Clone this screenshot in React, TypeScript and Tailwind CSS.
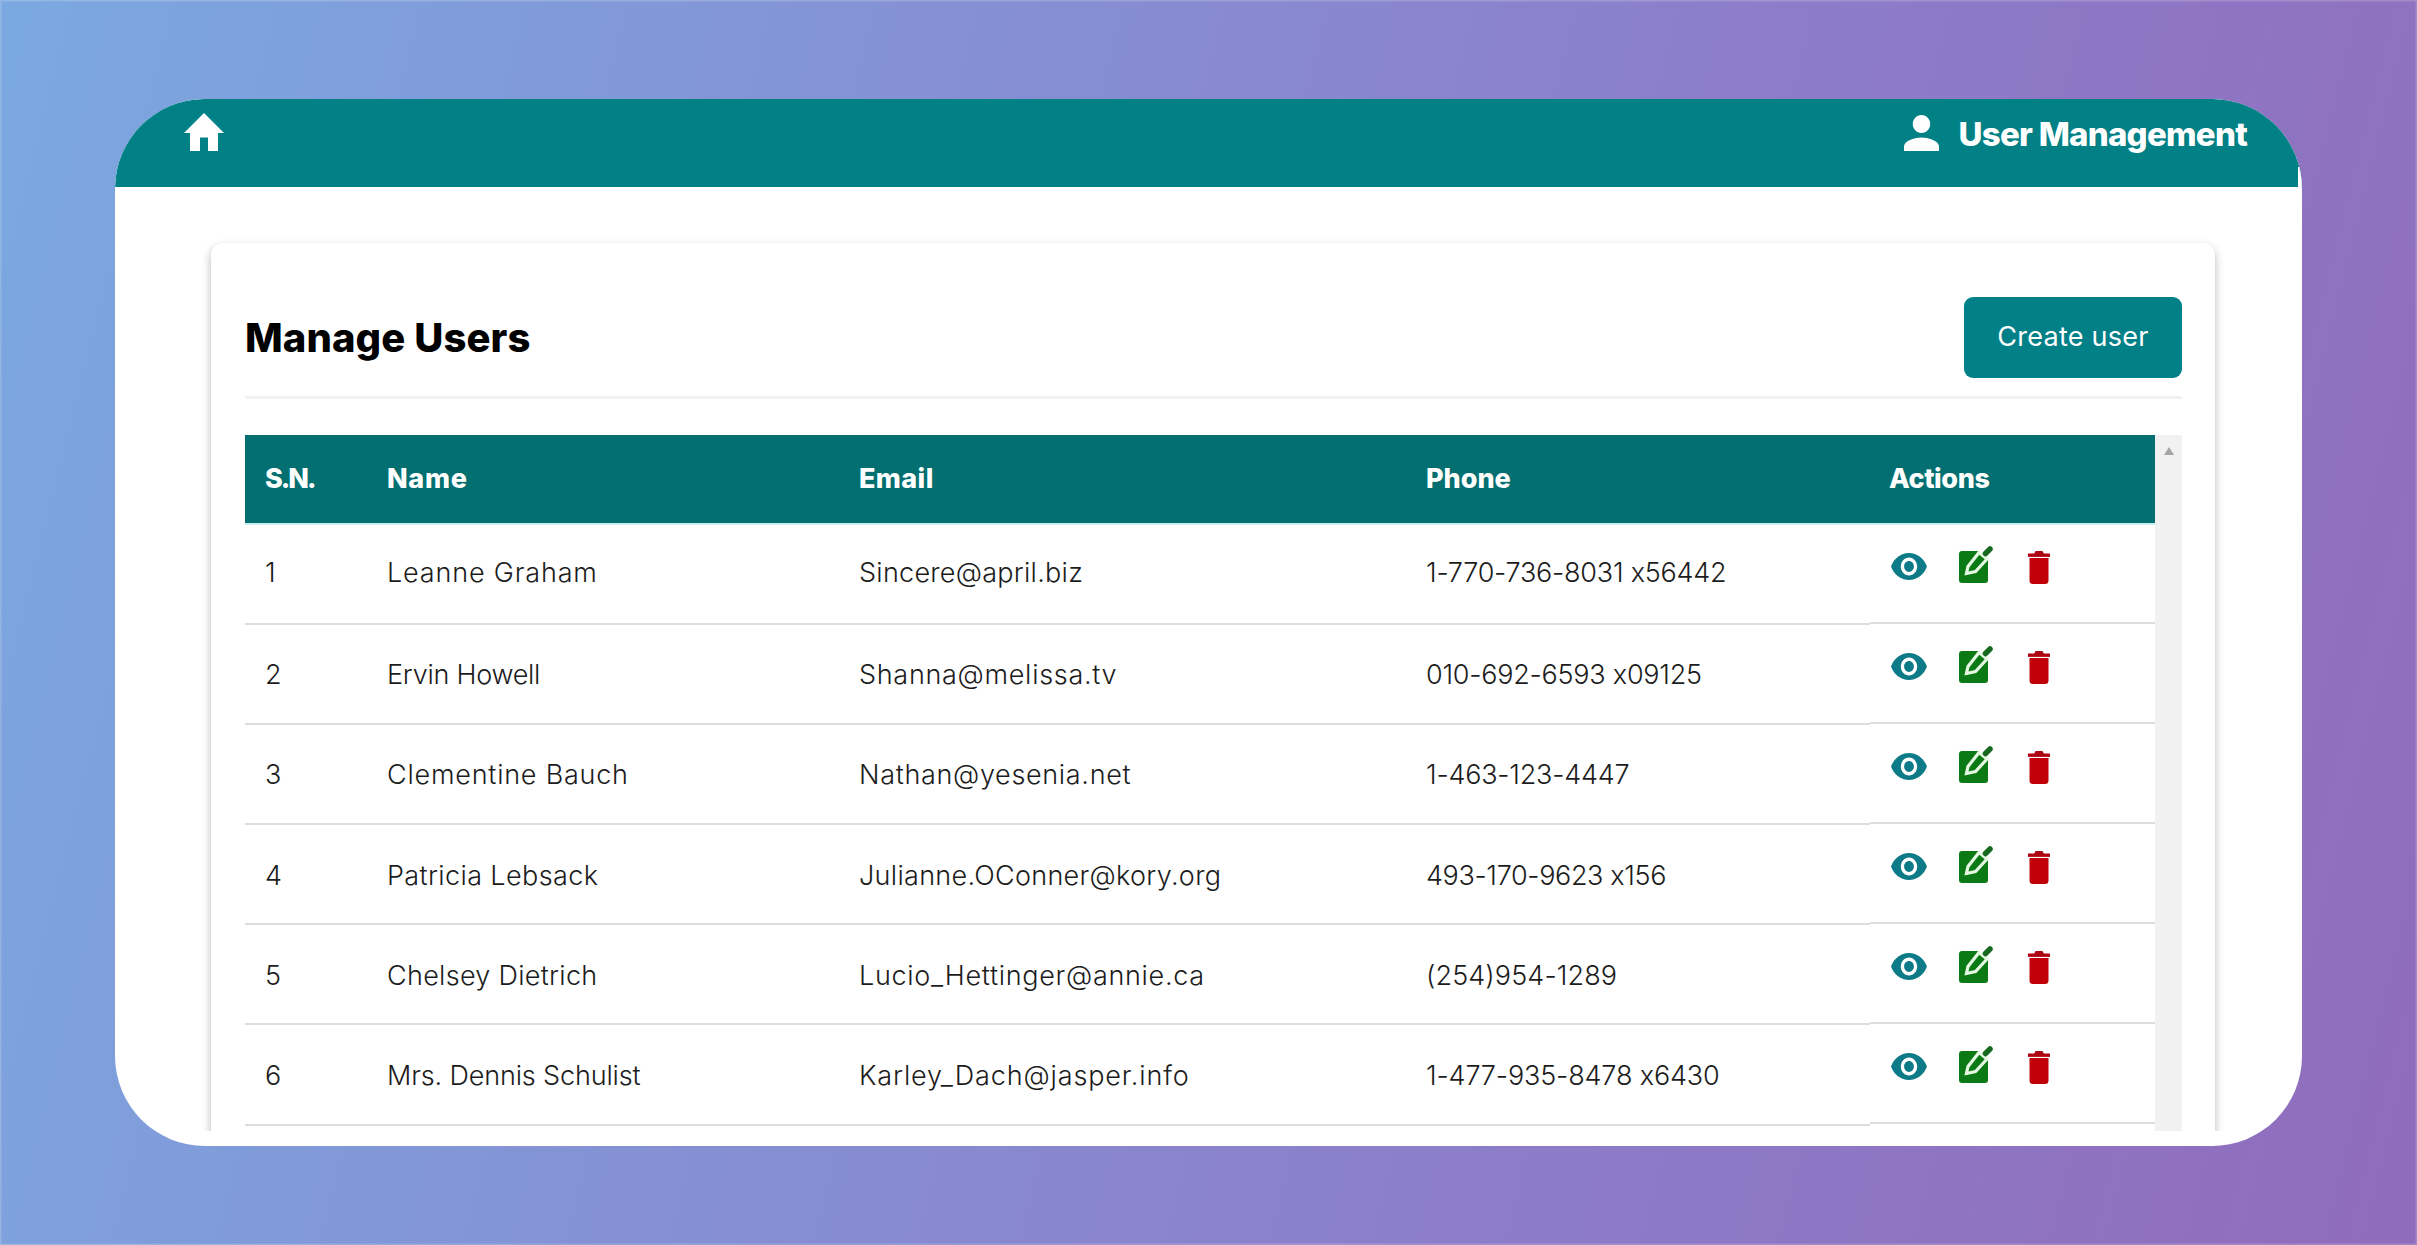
const rows = [
  { n: "1", name: ["Leanne Graham", "tracking-[0.83px]"], email: ["Sincere@april.biz", "tracking-[0.26px]"], phone: ["1-770-736-8031 x56442", "tracking-[-0.23px]"] },
  { n: "2", name: ["Ervin Howell", "tracking-[-0.26px]"], email: ["Shanna@melissa.tv", "tracking-[0.7px]"], phone: ["010-692-6593 x09125", "tracking-[-0.24px]"] },
  { n: "3", name: ["Clementine Bauch", "tracking-[0.77px]"], email: ["Nathan@yesenia.net", "tracking-[0.67px]"], phone: ["1-463-123-4447", "tracking-[-0.22px]"] },
  { n: "4", name: ["Patricia Lebsack", "tracking-[0.38px]"], email: ["Julianne.OConner@kory.org", "tracking-[0.3px]"], phone: ["493-170-9623 x156", "tracking-[-0.36px]"] },
  { n: "5", name: ["Chelsey Dietrich", "tracking-[0.29px]"], email: ["Lucio_Hettinger@annie.ca", "tracking-[0.7px]"], phone: ["(254)954-1289", "tracking-[0.1px]"] },
  { n: "6", name: ["Mrs. Dennis Schulist", "tracking-[-0.15px]"], email: ["Karley_Dach@jasper.info", "tracking-[0.87px]"], phone: ["1-477-935-8478 x6430", "tracking-[-0.15px]"] },
];

const grid = "grid grid-cols-[121px_473px_566px_465px_285px]";

function Eye() {
  return (
    <svg width="36" height="27" viewBox="1 4.5 22 15" preserveAspectRatio="none" fill="#0d7b87">
      <path d="M12 4.5C7 4.5 2.73 7.61 1 12c1.73 4.39 6 7.5 11 7.5s9.27-3.11 11-7.5c-1.73-4.39-6-7.5-11-7.5zM12 17c-2.76 0-5-2.24-5-5s2.24-5 5-5 5 2.24 5 5-2.24 5-5 5zm0-8c-1.66 0-3 1.34-3 3s1.34 3 3 3 3-1.34 3-3-1.34-3-3-3z" />
    </svg>
  );
}

function Edit() {
  return (
    <svg width="34" height="38" viewBox="0 0 34 38">
      <path d="M3 5 H20 L29 14 V34 Q29 37 26 37 H3 Q0 37 0 34 V8 Q0 5 3 5 Z" fill="#0b7a14" />
      <path d="M20 6.5 L28 13 L16.5 25.5 L7.5 27.5 L9 20.5 Z" fill="#0b7a14" stroke="#e6f7e2" strokeWidth="3.2" strokeLinejoin="miter" />
      <path d="M26.5 7.5 L31 3" stroke="#17691f" strokeWidth="5.5" strokeLinecap="round" />
    </svg>
  );
}

function Trash() {
  return (
    <svg width="22" height="33" viewBox="0 0 22 33">
      <path d="M6 3 L7.5 0 H14.5 L16 3 Z" fill="#a80812" />
      <rect x="0" y="2.5" width="22" height="3.4" fill="#b00510" />
      <path d="M1.5 7 H20.5 V29.5 Q20.5 33 17 33 H5 Q1.5 33 1.5 29.5 Z" fill="#c1000a" />
    </svg>
  );
}

export default function App() {
  return (
    <div className="h-[1245px] w-full overflow-hidden bg-[linear-gradient(104deg,#7ba8e0_0%,#8c7fca_62%,#906cbc_100%)] pl-[115px] pt-[99px] font-['Inter',sans-serif] [font-feature-settings:'calt'_0] shadow-[inset_0_0_0_1.5px_rgba(255,255,255,0.18)]">
      <div className="h-[1047px] w-[2187px] overflow-hidden rounded-[90px] bg-white">
        <header className="relative flex h-[88px] items-start justify-between rounded-t-[90px] bg-[#018085] pl-[69px] pr-[55px] text-white">
          <svg className="mt-[14px]" width="40" height="38" viewBox="2 3 20 17" preserveAspectRatio="none" fill="#ffffff">
            <path d="M10 20v-6h4v6h5v-8h3L12 3 2 12h3v8z" />
          </svg>
          <div className="mt-[16px] flex items-start gap-[20px]">
            <svg width="35" height="36" viewBox="4 4 16 16" preserveAspectRatio="none" fill="#ffffff">
              <path d="M12 12c2.21 0 4-1.79 4-4s-1.79-4-4-4-4 1.79-4 4 1.79 4 4 4zm0 2c-2.67 0-8 1.34-8 4v2h16v-2c0-2.66-5.33-4-8-4z" />
            </svg>
            <span className="text-[33px] leading-[38px] font-extrabold tracking-[-0.75px]">User Management</span>
          </div>
          <div className="absolute bottom-0 right-0 h-[20px] w-[4px] bg-white" />
        </header>

        <div className="ml-[86px] mt-[46px] h-[898px] w-[2024px] overflow-hidden px-[10px] pt-[10px]">
          <div className="h-[950px] rounded-[12px] bg-white pl-[34px] pr-[33px] pt-[54px] shadow-[0_4px_10px_rgba(0,0,0,0.28)]">
            <div className="flex h-[81px] items-center justify-between">
              <h1 className="text-[40px] leading-none font-extrabold tracking-[0.1px] text-black">Manage Users</h1>
              <button className="flex h-[81px] w-[218px] items-center justify-center rounded-[9px] bg-[#028087] text-[27px] font-normal tracking-[0.25px] text-white">
                Create user
              </button>
            </div>
            <div className="mt-[18px] h-[3px] bg-[#f1f1f1]" />
            <div className="mt-[36px] flex">
              <div className="w-[1910px] flex-none">
                <div className={`${grid} h-[90px] items-center border-b-2 border-[#c9eef0] bg-[#036f70] text-[27px] font-extrabold text-white`}>
                  <div className="pl-[20px] tracking-[-2px]">S.N.</div>
                  <div className="pl-[21px] tracking-[0.7px]">Name</div>
                  <div className="pl-[20px] tracking-[0.4px]">Email</div>
                  <div className="pl-[21px]">Phone</div>
                  <div className="pl-[19px] tracking-[-0.4px]">Actions</div>
                </div>
                {rows.map((r, idx) => {
                  const shift = idx === 0 ? "pb-[1px]" : "pt-[3px]";
                  return (
                    <div key={r.n} className={`${grid} h-[100.1px] text-[27px] font-light text-[#1c1c1c]`}>
                      <div className={`flex items-center border-b-2 border-[#dddddd] pl-[20px] ${shift}`}>{r.n}</div>
                      <div className={`flex items-center border-b-2 border-[#dddddd] pl-[21px] ${shift} ${r.name[1]}`}>{r.name[0]}</div>
                      <div className={`flex items-center border-b-2 border-[#dddddd] pl-[20px] ${shift} ${r.email[1]}`}>{r.email[0]}</div>
                      <div className={`flex items-center border-b-2 border-[#dddddd] pl-[21px] ${shift} ${r.phone[1]}`}>{r.phone[0]}</div>
                      <div className="flex h-[98.6px] items-start border-b-2 border-[#dddddd] pl-[21px] pt-[21px]">
                        <div className="mt-[7px] mr-[32px]"><Eye /></div>
                        <div className="mr-[35px]"><Edit /></div>
                        <div className="mt-[5px]"><Trash /></div>
                      </div>
                    </div>
                  );
                })}
              </div>
              <div className="flex h-[760px] w-[27px] flex-none justify-center bg-[#f1f1f1] pt-[12px]">
                <svg width="10" height="8" viewBox="0 0 10 8" fill="#a6a6a6">
                  <polygon points="5,0 10,8 0,8" />
                </svg>
              </div>
            </div>
          </div>
        </div>
      </div>
    </div>
  );
}
